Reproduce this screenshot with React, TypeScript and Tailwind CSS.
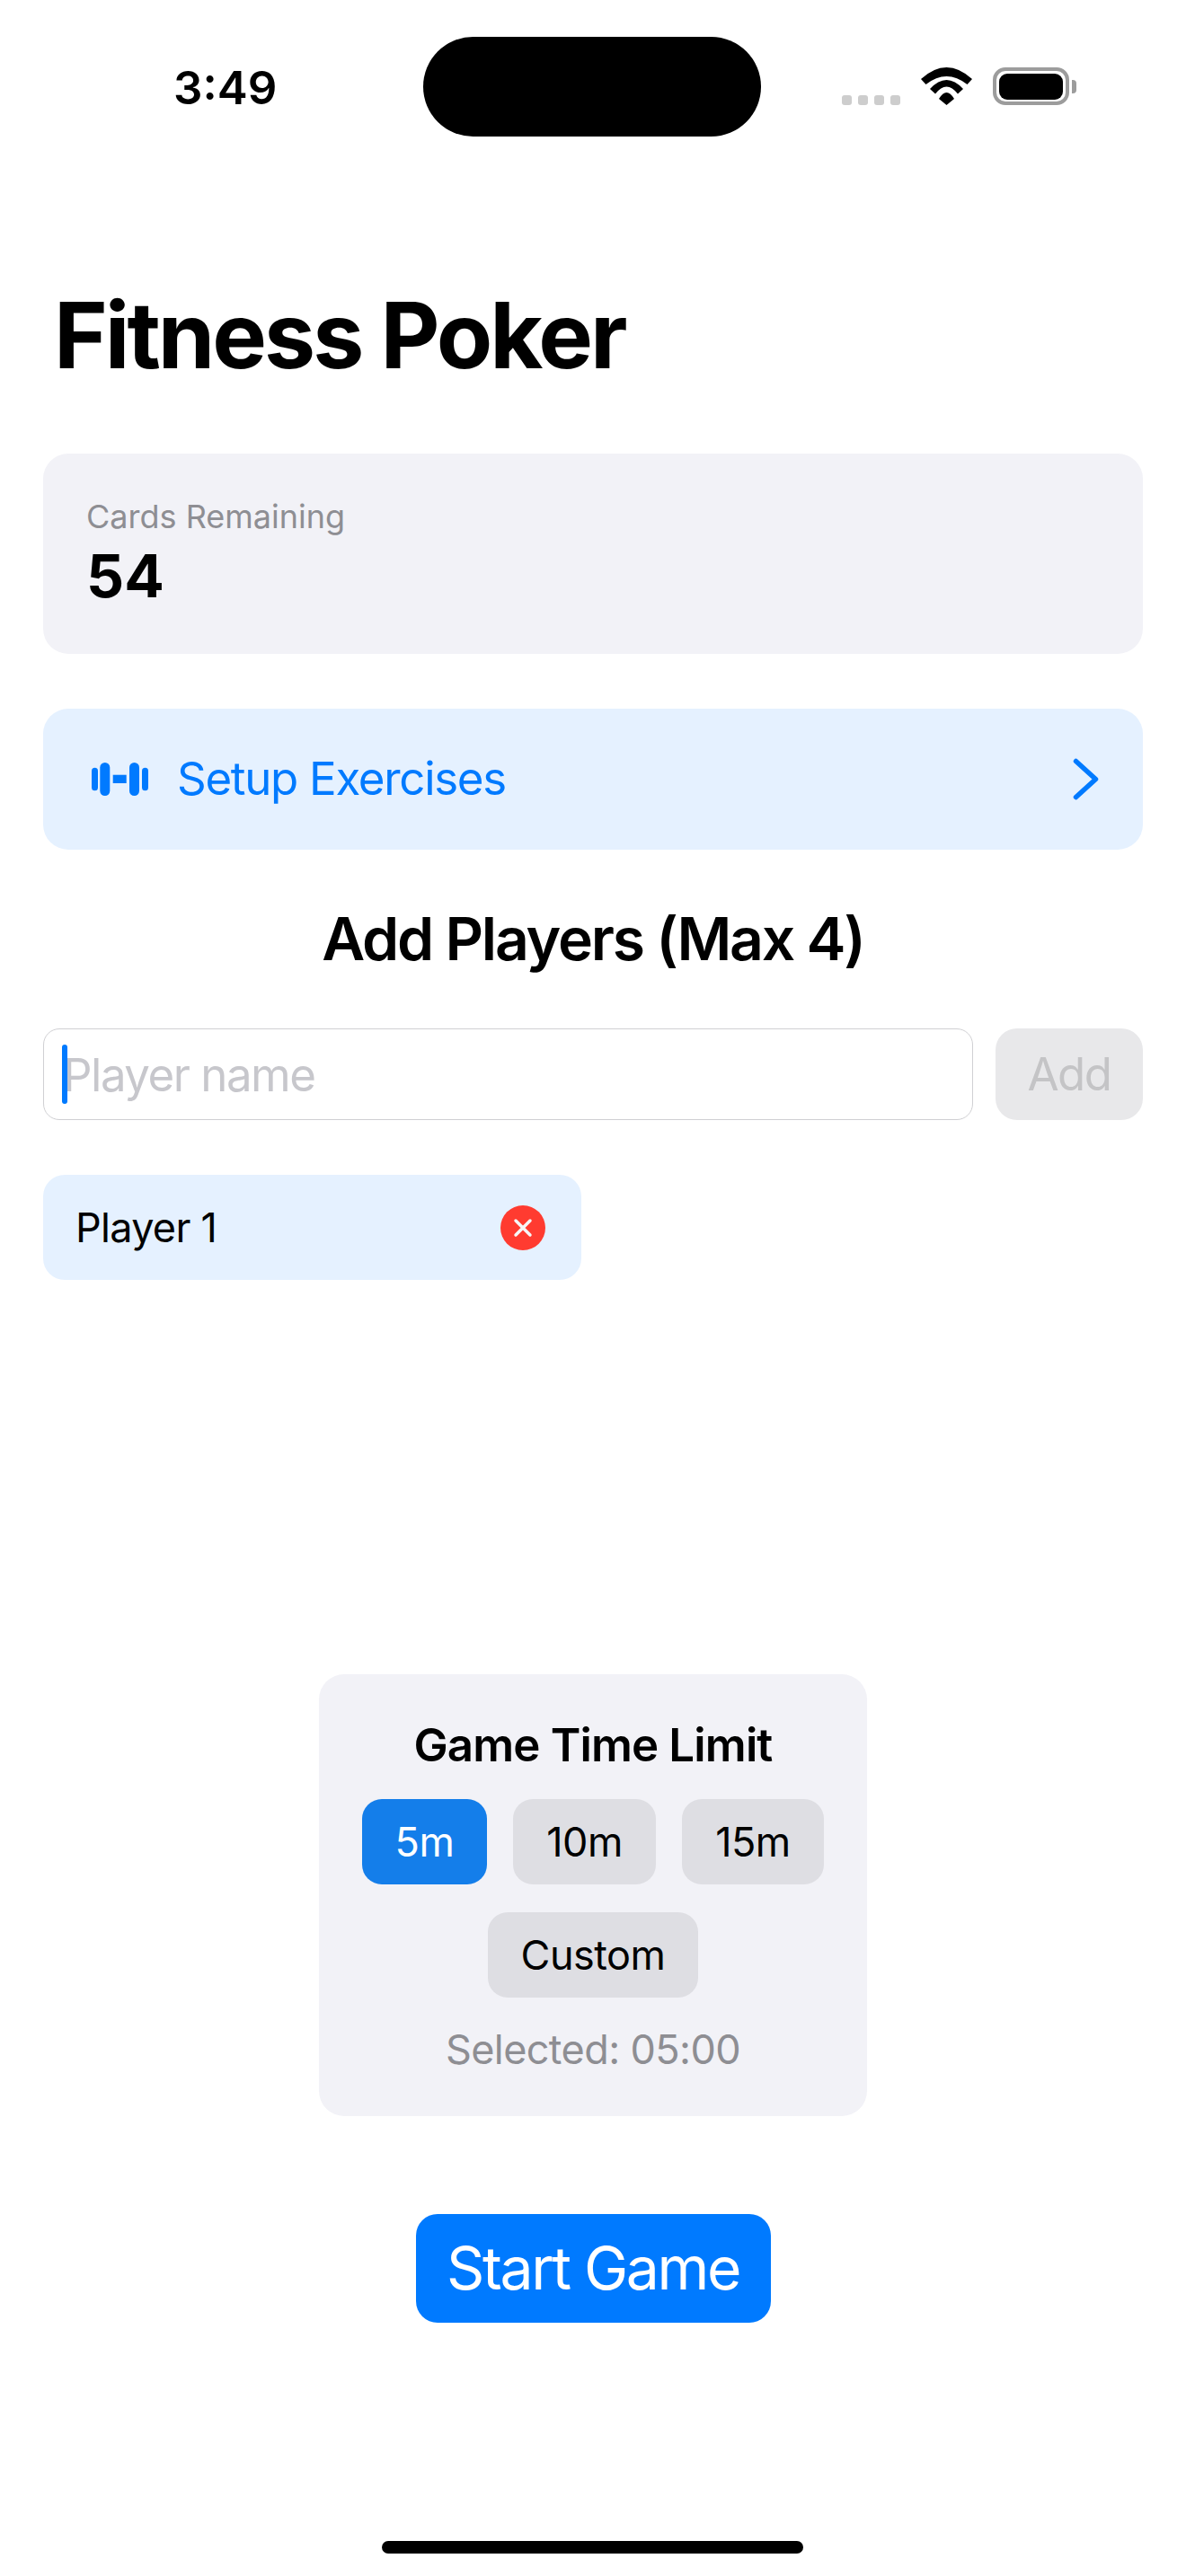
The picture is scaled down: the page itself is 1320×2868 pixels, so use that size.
const font = { fontFamily: "Inter, sans-serif" };

function Wifi() {
  return (
    <svg width="57" height="42" viewBox="0 0 57 42" fill="#000">
      <path d="M0 13Q28.500 -13 57 13L51.500 19Q28.500 1 5.500 19Z" />
      <path d="M10 24Q28.500 4 47 24L41 29.500Q28.500 13.500 16 29.500Z" />
      <path d="M20 35Q28.500 21 37 35L28.500 42Z" />
    </svg>
  );
}

function Dumbbell() {
  return (
    <svg width="63" height="37" viewBox="0 0 63 37" fill="#007aff" className="shrink-0">
      <rect x="0" y="5.700" width="7" height="25.600" rx="3.500" />
      <rect x="9.300" y="0" width="11" height="37" rx="5.500" />
      <rect x="23.700" y="13.700" width="15" height="9.300" />
      <rect x="42" y="0" width="11" height="37" rx="5.500" />
      <rect x="56" y="5.700" width="7" height="25.600" rx="3.500" />
    </svg>
  );
}

function TimeButton({ label, selected, width }: { label: string; selected?: boolean; width: string }) {
  return (
    <button className={`h-[95px] rounded-[22px] text-[45px] tracking-[-0.5px] ${width} ${selected ? "bg-[#147eea] text-white" : "bg-[#dedee3] text-black"}`}>
      {label}
    </button>
  );
}

export default function App() {
  return (
    <div className="relative flex h-[2868px] w-[1320px] flex-col overflow-hidden bg-white" style={font}>
      {/* status bar */}
      <div className="relative flex h-[152px] shrink-0 items-start justify-between pl-[193px] pr-[122px]">
        <span className="mt-[68px] text-[51px] font-semibold leading-[60px] text-black">3:49</span>
        <div className="mt-[75px] flex items-end">
          <div className="mr-[23px] flex gap-[7px]">
            <span className="h-[11px] w-[11px] rounded-[3px] bg-[#cdcdcd]" />
            <span className="h-[11px] w-[11px] rounded-[3px] bg-[#cdcdcd]" />
            <span className="h-[11px] w-[11px] rounded-[3px] bg-[#cdcdcd]" />
            <span className="h-[11px] w-[11px] rounded-[3px] bg-[#cdcdcd]" />
          </div>
          <Wifi />
          <div className="ml-[23px] flex items-center">
            <div className="flex h-[42px] w-[85px] items-center justify-center rounded-[14px] border-[4px] border-[#9c9c9c]">
              <div className="h-[29px] w-[71px] rounded-[9px] bg-black" />
            </div>
            <div className="ml-[3px] h-[15px] w-[5px] rounded-r-[4px] bg-[#9c9c9c]" />
          </div>
        </div>
        <div className="absolute left-[471px] top-[41px] h-[111px] w-[376px] rounded-[56px] bg-black" />
      </div>

      <main className="flex flex-1 flex-col px-[48px]">
        <h1 className="ml-[12px] mt-[159px] text-[102px] font-bold leading-[124px] tracking-[-3px] text-black">Fitness Poker</h1>

        <div className="mt-[70px] flex h-[223px] flex-col rounded-[28px] bg-[#f2f2f7] pl-[48px] pt-[48px]">
          <span className="text-[36px] leading-[44px] text-[#8e8e93]">Cards Remaining</span>
          <span className="mt-[4px] text-[66px] font-bold leading-[80px] text-black">54</span>
        </div>

        <button className="mt-[61px] flex h-[157px] items-center justify-between rounded-[28px] bg-[#e5f1ff] pl-[54px] pr-[49px]">
          <span className="flex items-center gap-[32px]">
            <Dumbbell />
            <span className="text-[51px] tracking-[-1.3px] text-[#007aff]">Setup Exercises</span>
          </span>
          <svg width="29" height="47" viewBox="0 0 29 47" fill="none" stroke="#007aff" strokeWidth="5.500" strokeLinecap="round" strokeLinejoin="round">
            <path d="M3.500 3.500L25.500 23.500L3.500 43.500" />
          </svg>
        </button>

        <h2 className="mt-[59px] text-center text-[66px] font-semibold leading-[80px] tracking-[-2.200px] text-black">Add Players (Max 4)</h2>

        <div className="mt-[60px] flex gap-[25px]">
          <div className="relative h-[102px] flex-1">
            <input
              placeholder="Player name"
              className="h-full w-full rounded-[18px] border border-[#d0d0d3] bg-white pl-[21px] text-[51px] tracking-[-1.500px] outline-none placeholder:text-[#c7c7cc]"
            />
            <div className="absolute left-[21px] top-[18px] h-[66px] w-[6px] rounded-full bg-[#007aff]" />
          </div>
          <button className="h-[102px] w-[164px] rounded-[24px] bg-[#e8e8ea] text-[51px] tracking-[-1.500px] text-[#c4c4c6]">Add</button>
        </div>

        <div className="mt-[61px] flex h-[117px] w-[599px] items-center justify-between rounded-[24px] bg-[#e5f1ff] pl-[36px] pr-[40px]">
          <span className="text-[45px] tracking-[-0.7px] text-black">Player 1</span>
          <span className="flex h-[50px] w-[50px] items-center justify-center rounded-full bg-[#ff3b30]">
            <svg width="22" height="22" viewBox="0 0 22 22" stroke="#f6f6f6" strokeWidth="3.500" strokeLinecap="round">
              <path d="M3 3L19 19M19 3L3 19" />
            </svg>
          </span>
        </div>

        <div className="mx-auto mt-[439px] flex h-[492px] w-[610px] flex-col items-center rounded-[28px] bg-[#f2f2f7] pt-[48px]">
          <h3 className="text-[51px] font-semibold leading-[62px] tracking-[-0.850px] text-black">Game Time Limit</h3>
          <div className="mt-[29px] flex gap-[29px]">
            <TimeButton label="5m" selected width="w-[139px]" />
            <TimeButton label="10m" width="w-[159px]" />
            <TimeButton label="15m" width="w-[158px]" />
          </div>
          <div className="mt-[31px]">
            <TimeButton label="Custom" width="w-[234px]" />
          </div>
          <p className="mt-[30px] text-[45px] leading-[56px] tracking-[-0.600px] text-[#8e8e93]">Selected: 05:00</p>
        </div>

        <button className="mx-auto mt-[109px] h-[121px] w-[395px] rounded-[24px] bg-[#007aff] text-[66px] tracking-[-2.400px] text-white">Start Game</button>
      </main>

      <div className="absolute bottom-[25px] left-[425px] h-[14px] w-[469px] rounded-full bg-black" />
    </div>
  );
}
